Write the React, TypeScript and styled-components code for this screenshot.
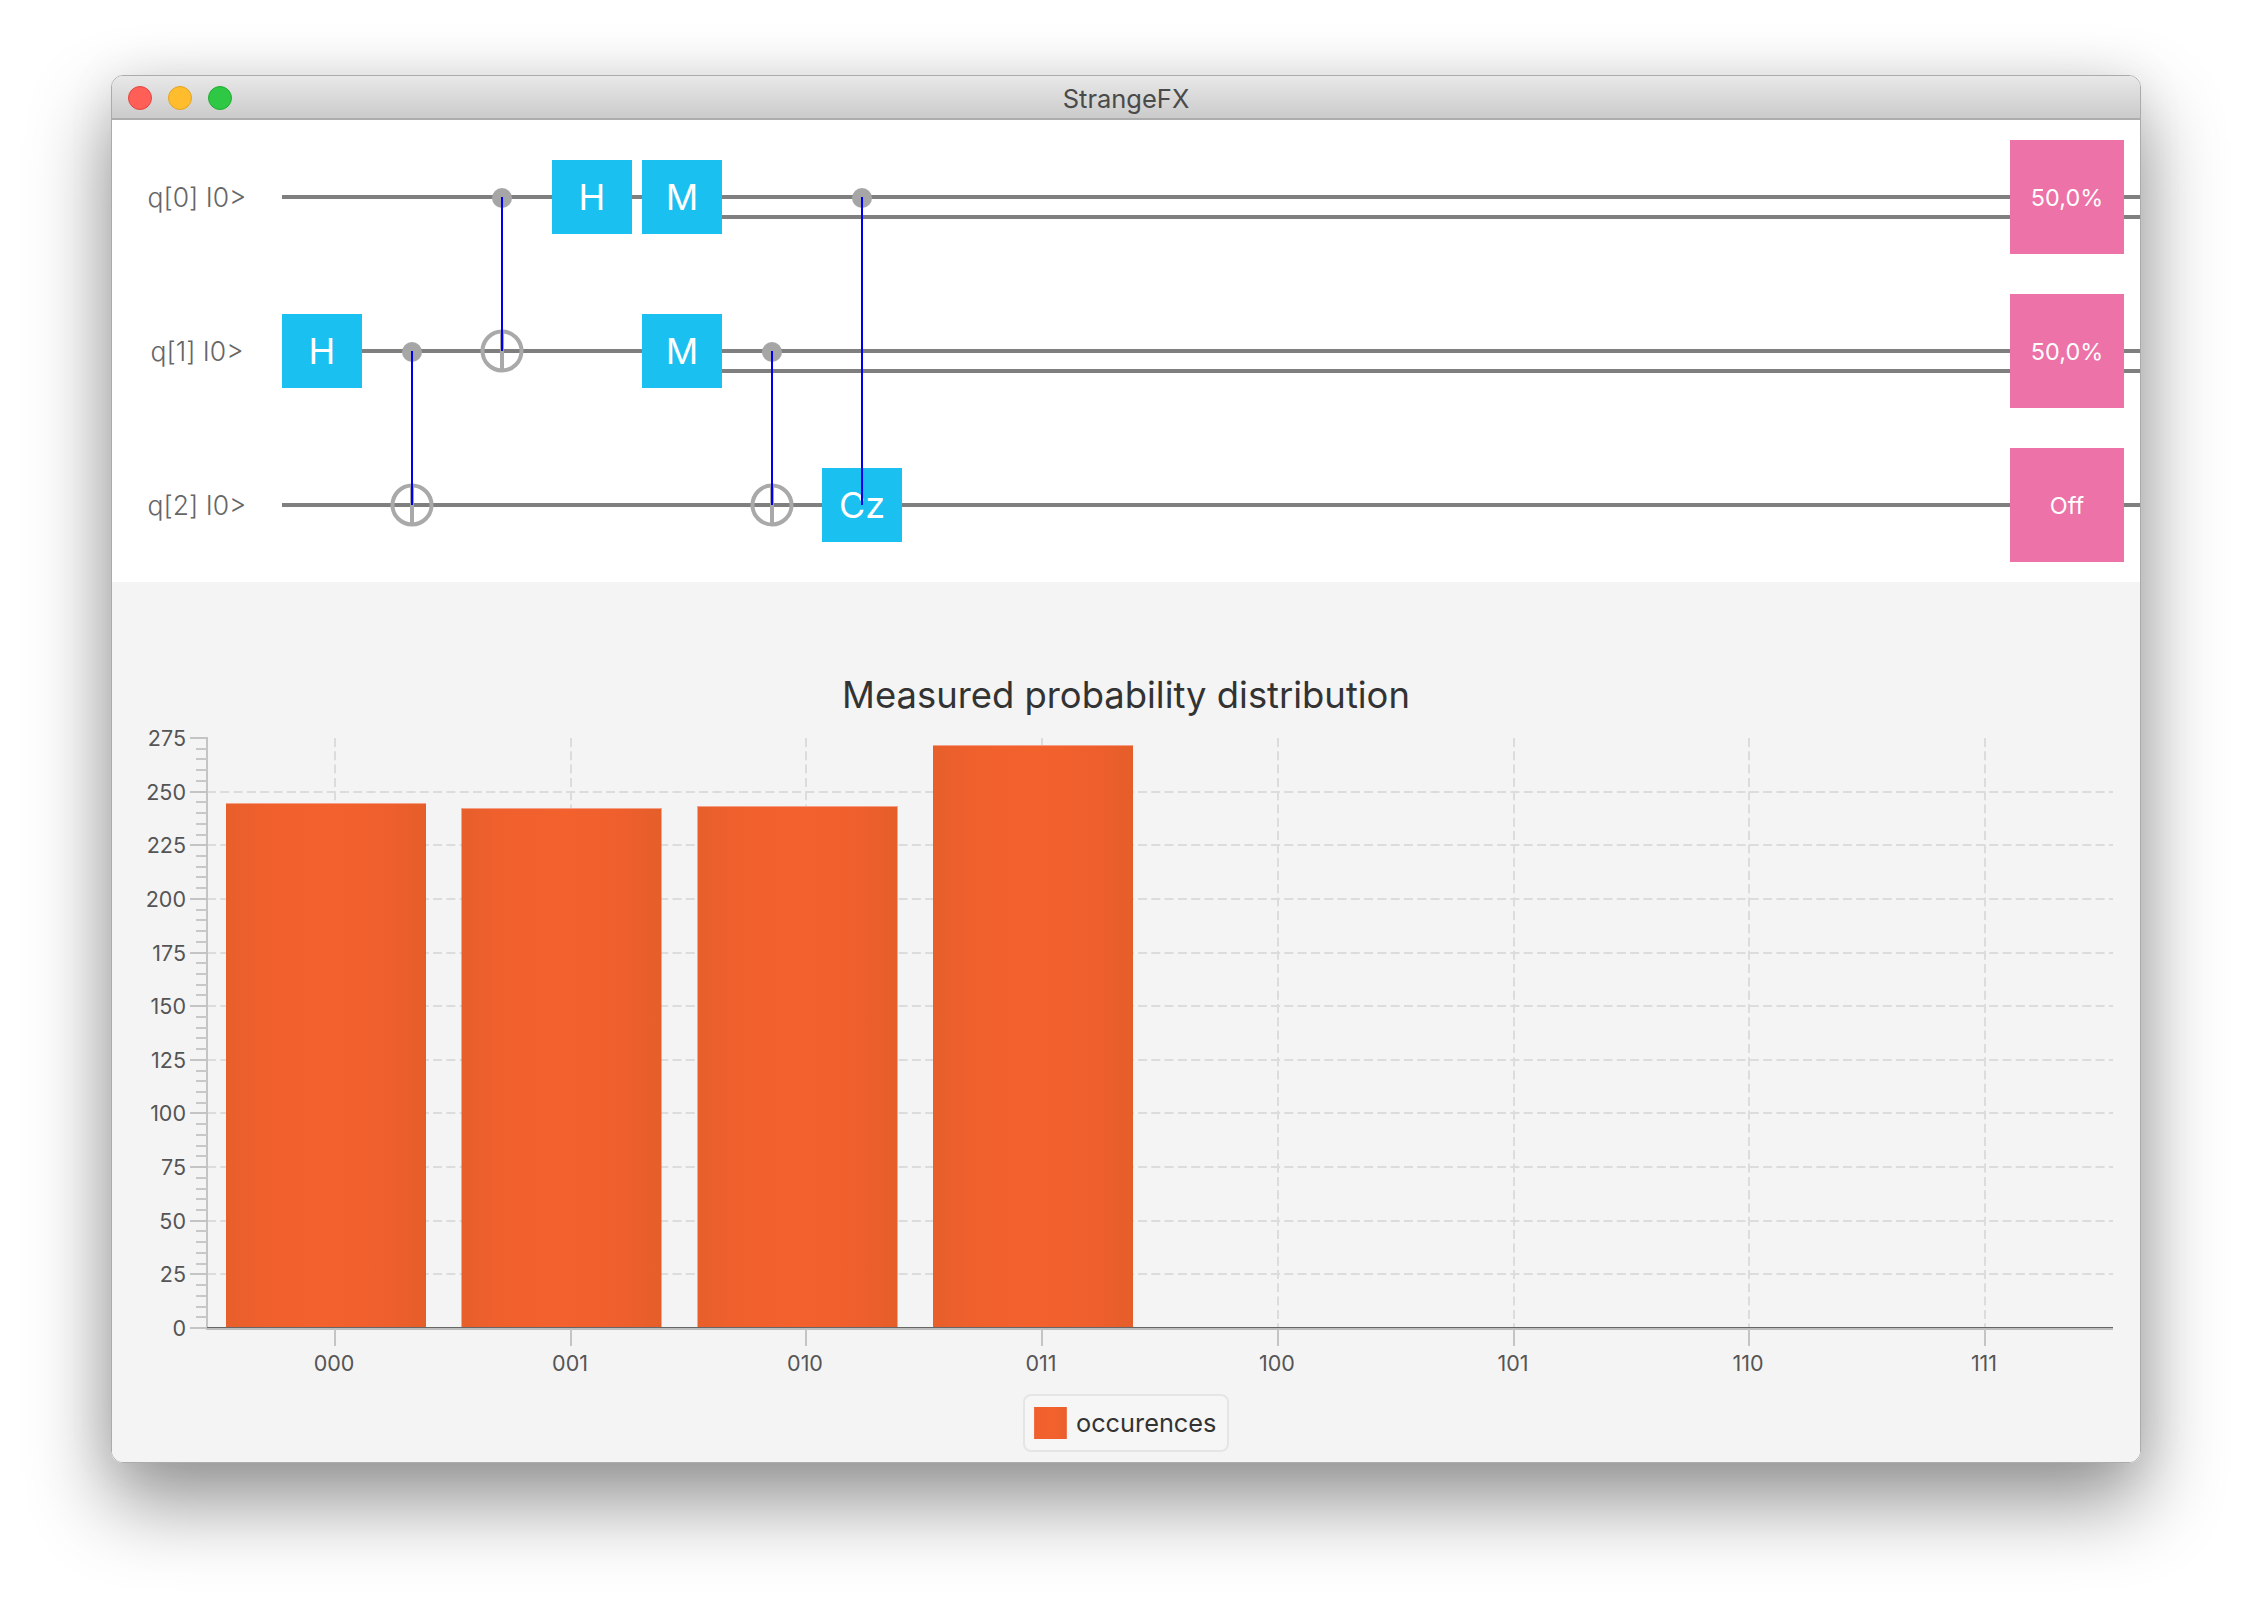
import React from 'react';
import styled, { createGlobalStyle } from 'styled-components';

const GlobalStyle = createGlobalStyle`
    html, body {
        margin: 0;
        background: #ffffff;
    }
`;

const Page = styled.div`
    width: 2252px;
    height: 1610px;
    box-sizing: border-box;
    padding: 75px 111px 0;
    overflow: hidden;
    font-family: Inter, "Liberation Sans", sans-serif;
`;

const WindowFrame = styled.div`
    width: 2030px;
    border-radius: 12px;
    box-shadow: 0 38px 80px 2px rgba(0, 0, 0, 0.42), 0 0 50px rgba(0, 0, 0, 0.07);
`;

const Window = styled.div`
    width: 2030px;
    height: 1388px;
    box-sizing: border-box;
    border: 1px solid #ababab;
    border-radius: 12px;
    overflow: hidden;
    background: #f4f4f4;
`;

const TitleBar = styled.div`
    height: 44px;
    box-sizing: border-box;
    display: flex;
    align-items: center;
    position: relative;
    justify-content: center;
    padding-top: 2px;
    background: linear-gradient(#e8e8e8, #cbcbcb);
    border-bottom: 2px solid #adadad;
    color: #4a4a4a;
    font-size: 25.5px;
`;

const Lights = styled.div`
    position: absolute;
    left: 16px;
    top: 10px;
    display: flex;
    gap: 16px;
`;

const Light = styled.div<{ fill: string; edge: string }>`
    width: 24px;
    height: 24px;
    box-sizing: border-box;
    border-radius: 50%;
    background: ${props => props.fill};
    border: 1px solid ${props => props.edge};
`;

const Circuit = styled.div`
    background: #ffffff;
    display: flex;
    flex-direction: column;
`;

const Row = styled.div`
    height: 154px;
    display: flex;
    align-items: stretch;
`;

const RowLabel = styled.div`
    width: 170px;
    flex: none;
    display: flex;
    align-items: center;
    justify-content: center;
    font-size: 26.5px;
    font-weight: 300;
    color: #666666;
`;

const Slot = styled.div<{ classical?: boolean; measured?: boolean; last?: boolean }>`
    position: relative;
    width: ${props => (props.last ? 'auto' : '90px')};
    flex: ${props => (props.last ? '1' : 'none')};
    display: flex;
    align-items: center;
    justify-content: ${props => (props.last ? 'flex-end' : 'flex-start')};
    padding-right: ${props => (props.last ? '16px' : '0')};
    box-sizing: border-box;

    &::before {
        content: '';
        position: absolute;
        left: 0;
        right: 0;
        top: 75px;
        height: 4px;
        background: #7f7f7f;
    }

    ${props => (props.classical || props.measured) && `
        &::after {
            content: '';
            position: absolute;
            left: ${props.measured ? '80px' : '0'};
            right: 0;
            top: 95px;
            height: 4px;
            background: #7f7f7f;
        }
    `}
`;

const Cell = styled.div`
    position: relative;
    z-index: 1;
    width: 80px;
    display: flex;
    align-items: center;
    justify-content: center;
`;

const Gate = styled(Cell)`
    height: 74px;
    background: #19c0f0;
    color: #ffffff;
    font-size: 36px;
`;

const Dot = styled.div`
    width: 20px;
    height: 20px;
    margin-top: 2px;
    border-radius: 50%;
    background: #a6a6a6;
`;

const Link = styled.div<{ span: number }>`
    position: absolute;
    z-index: 3;
    left: 39px;
    top: 77px;
    width: 2px;
    height: ${props => props.span * 154}px;
    background: #0000f0;
`;

const Output = styled.div`
    position: relative;
    z-index: 1;
    width: 114px;
    height: 114px;
    display: flex;
    align-items: center;
    justify-content: center;
    background: #ec72a7;
    color: #ffffff;
    font-size: 23.4px;
`;

const ChartPanel = styled.div`
    height: 880px;
    box-sizing: border-box;
    padding-top: 93px;
    display: flex;
    flex-direction: column;
    align-items: center;
    background: #f4f4f4;
`;

const ChartTitle = styled.div`
    height: 40px;
    line-height: 40px;
    font-size: 36.4px;
    color: #333333;
    margin-bottom: 5px;
`;

const ChartSvg = styled.svg`
    display: block;
    flex: none;
    font-family: Inter, "Liberation Sans", sans-serif;
`;

const Legend = styled.div`
    margin-top: 14px;
    height: 58px;
    width: 206px;
    box-sizing: border-box;
    border: 2px solid #e5e5e5;
    border-radius: 8px;
    background: #f6f6f6;
    display: flex;
    align-items: center;
    padding-left: 9px;
    gap: 9px;
    font-size: 25.3px;
    color: #333333;
`;

const LegendText = styled.span`
    margin-bottom: 2px;
`;

const Swatch = styled.div`
    width: 33px;
    height: 32px;
    background: linear-gradient(90deg, #ee7a50 0, #f0602d 4%, #f3622d 55%, #eb5f2c 96%, #ee8a66 100%);
`;

function Target() {
    return (
        <svg width="44" height="44" viewBox="0 0 44 44">
            <circle cx="22" cy="22" r="19.5" fill="none" stroke="#a9a9a9" strokeWidth="4" />
            <line x1="22" y1="3" x2="22" y2="41" stroke="#a9a9a9" strokeWidth="4" />
        </svg>
    );
}

const AXIS_X = 207;
const AXIS_END = 2113;
const TOP = 738;
const BOTTOM = 1328;
const TICK0 = 335;
const PITCH = 235.7;

const yFor = (value: number) => Math.round(BOTTOM - (value / 275) * (BOTTOM - TOP));
const xFor = (index: number) => Math.round(TICK0 + PITCH * index);

const categories = ['000', '001', '010', '011', '100', '101', '110', '111'];
const bars = [
    { x: 226, top: 803 },
    { x: 461.5, top: 808 },
    { x: 697.5, top: 806 },
    { x: 933, top: 745 },
];
const majors = Array.from({ length: 12 }, (_, i) => i * 25);
const minors = Array.from({ length: 56 }, (_, i) => i * 5).filter(v => v % 25 !== 0);

function Chart() {
    return (
        <ChartSvg width="2028" height="660" viewBox="112 720 2028 660">
            <defs>
                <linearGradient id="bar" x1="0" x2="1" y1="0" y2="0">
                    <stop offset="0" stopColor="#e75f2b" />
                    <stop offset="0.2" stopColor="#f0602d" />
                    <stop offset="0.5" stopColor="#f3622d" />
                    <stop offset="0.8" stopColor="#ef5f2d" />
                    <stop offset="1" stopColor="#e55e2a" />
                </linearGradient>
            </defs>

            {majors.slice(1, 11).map(v => (
                <line key={v} x1={AXIS_X} x2={AXIS_END} y1={yFor(v)} y2={yFor(v)} stroke="#dcdcdc" strokeWidth="2" strokeDasharray="9 4.3" />
            ))}
            {categories.map((c, i) => (
                <line key={c} x1={xFor(i)} x2={xFor(i)} y1={TOP} y2={BOTTOM} stroke="#dcdcdc" strokeWidth="2" strokeDasharray="9 4.3" />
            ))}

            {bars.map(b => (
                <g key={b.x}>
                    <rect x={b.x} y={b.top} width="200" height={BOTTOM - b.top} fill="url(#bar)" />
                    <rect x={b.x} y={b.top} width="200" height="1" fill="#f4a088" />
                </g>
            ))}

            <line x1={AXIS_X} x2={AXIS_X} y1={TOP - 1} y2={BOTTOM + 2} stroke="#c4c4c4" strokeWidth="2" />
            {majors.map(v => (
                <line key={v} x1="190" x2={AXIS_X} y1={yFor(v)} y2={yFor(v)} stroke="#c4c4c4" strokeWidth="2" />
            ))}
            {minors.map(v => (
                <line key={v} x1="196" x2={AXIS_X} y1={yFor(v)} y2={yFor(v)} stroke="#c8c8c8" strokeWidth="2" />
            ))}
            {majors.map(v => (
                <text key={v} x="186" y={yFor(v) + 8} textAnchor="end" fontSize="21.5" fill="#555555">{v}</text>
            ))}

            <line x1={AXIS_X} x2={AXIS_END} y1={BOTTOM + 1} y2={BOTTOM + 1} stroke="#bdbdbd" strokeWidth="2" />
            <line x1={AXIS_X} x2={AXIS_END} y1={BOTTOM - 0.5} y2={BOTTOM - 0.5} stroke="#666666" strokeWidth="1" />
            {categories.map((c, i) => (
                <g key={c}>
                    <line x1={xFor(i)} x2={xFor(i)} y1={BOTTOM + 1} y2={BOTTOM + 18} stroke="#c4c4c4" strokeWidth="2" />
                    <text x={xFor(i) - 1} y="1371" textAnchor="middle" fontSize="21.5" fill="#555555">{c}</text>
                </g>
            ))}
        </ChartSvg>
    );
}

export default function App() {
    return (
        <Page>
            <GlobalStyle />
            <WindowFrame>
                <Window>
                    <TitleBar>
                        <Lights>
                            <Light fill="#ff5f57" edge="#e2463f" />
                            <Light fill="#ffbd2e" edge="#e1a325" />
                            <Light fill="#2fc845" edge="#22ad33" />
                        </Lights>
                        StrangeFX
                    </TitleBar>

                    <Circuit>
                        <Row>
                            <RowLabel>q[0] I0&gt;</RowLabel>
                            <Slot />
                            <Slot />
                            <Slot><Cell><Dot /></Cell><Link span={1} /></Slot>
                            <Slot><Gate>H</Gate></Slot>
                            <Slot measured><Gate>M</Gate></Slot>
                            <Slot classical />
                            <Slot classical><Cell><Dot /></Cell><Link span={2} /></Slot>
                            <Slot classical last><Output>50,0%</Output></Slot>
                        </Row>
                        <Row>
                            <RowLabel>q[1] I0&gt;</RowLabel>
                            <Slot><Gate>H</Gate></Slot>
                            <Slot><Cell><Dot /></Cell><Link span={1} /></Slot>
                            <Slot><Cell><Target /></Cell></Slot>
                            <Slot />
                            <Slot measured><Gate>M</Gate></Slot>
                            <Slot classical><Cell><Dot /></Cell><Link span={1} /></Slot>
                            <Slot classical />
                            <Slot classical last><Output>50,0%</Output></Slot>
                        </Row>
                        <Row>
                            <RowLabel>q[2] I0&gt;</RowLabel>
                            <Slot />
                            <Slot><Cell><Target /></Cell></Slot>
                            <Slot />
                            <Slot />
                            <Slot />
                            <Slot><Cell><Target /></Cell></Slot>
                            <Slot><Gate>Cz</Gate></Slot>
                            <Slot last><Output>Off</Output></Slot>
                        </Row>
                    </Circuit>

                    <ChartPanel>
                        <ChartTitle>Measured probability distribution</ChartTitle>
                        <Chart />
                        <Legend>
                            <Swatch />
                            <LegendText>occurences</LegendText>
                        </Legend>
                    </ChartPanel>
                </Window>
            </WindowFrame>
        </Page>
    );
}
